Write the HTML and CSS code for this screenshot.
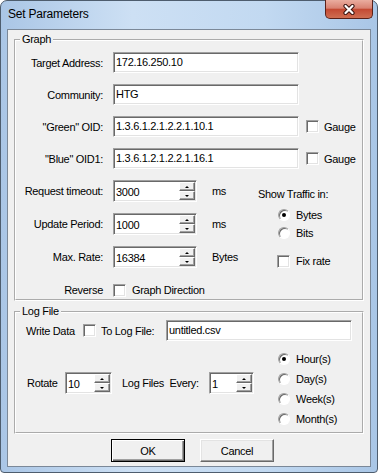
FILE: index.html
```html
<!DOCTYPE html>
<html lang="en">
<head>
  <meta charset="UTF-8" />
  <meta name="viewport" content="width=device-width, initial-scale=1.0"/>
  <title>Set Parameters</title>
  <link rel="stylesheet" href="styles.css">
</head>
<body>

  <div class="window">
    <div class="titlebar">
      <span class="title">Set Parameters</span>
      <div class="close-btn">
        <svg width="16" height="11" viewBox="0 0 16 11">
          <path d="M4.5 2 L11.5 9 M11.5 2 L4.5 9" stroke="#3b1410" stroke-width="4.2" stroke-linecap="round"/>
          <path d="M4.5 2 L11.5 9 M11.5 2 L4.5 9" stroke="#fff" stroke-width="2.2" stroke-linecap="round"/>
        </svg>
      </div>
    </div>

    <div class="client">
      <fieldset class="group graph">
        <legend>Graph</legend>

        <div class="row text-row first">
          <span class="label">Target Address:</span>
          <div class="edit wide">172.16.250.10</div>
        </div>
        <div class="row text-row">
          <span class="label">Community:</span>
          <div class="edit wide">HTG</div>
        </div>
        <div class="row text-row">
          <span class="label">&quot;Green&quot; OID:</span>
          <div class="edit wide">1.3.6.1.2.1.2.2.1.10.1</div>
          <span class="check gauge-check"></span>
          <span>Gauge</span>
        </div>
        <div class="row text-row">
          <span class="label">&quot;Blue&quot; OID1:</span>
          <div class="edit wide">1.3.6.1.2.1.2.2.1.16.1</div>
          <span class="check gauge-check"></span>
          <span>Gauge</span>
        </div>

        <div class="lower">
          <div class="spin-rows">
            <div class="row spin-row">
              <span class="label">Request timeout:</span>
              <div class="spin wide-spin">
                <span class="val">3000</span>
                <span class="arrows"><span class="up"></span><span class="down"></span></span>
              </div>
              <span class="unit">ms</span>
            </div>
            <div class="row spin-row">
              <span class="label">Update Period:</span>
              <div class="spin wide-spin">
                <span class="val">1000</span>
                <span class="arrows"><span class="up"></span><span class="down"></span></span>
              </div>
              <span class="unit">ms</span>
            </div>
            <div class="row spin-row">
              <span class="label">Max. Rate:</span>
              <div class="spin wide-spin">
                <span class="val">16384</span>
                <span class="arrows"><span class="up"></span><span class="down"></span></span>
              </div>
              <span class="unit">Bytes</span>
            </div>
            <div class="row reverse-row">
              <span class="label">Reverse</span>
              <span class="check"></span>
              <span class="check-text">Graph Direction</span>
            </div>
          </div>

          <div class="traffic">
            <div class="traffic-title">Show Traffic in:</div>
            <div class="option first-option"><span class="radio on"></span>Bytes</div>
            <div class="option"><span class="radio"></span>Bits</div>
            <div class="option fix"><span class="check"></span>Fix rate</div>
          </div>
        </div>
      </fieldset>

      <fieldset class="group log">
        <legend>Log File</legend>

        <div class="row write-row">
          <span class="write-label">Write Data</span>
          <span class="check"></span>
          <span class="to-label">To Log File:</span>
          <div class="edit file">untitled.csv</div>
        </div>

        <div class="log-lower">
          <div class="row rotate-row">
            <span class="rotate-label">Rotate</span>
            <div class="spin small-spin">
              <span class="val">10</span>
              <span class="arrows"><span class="up"></span><span class="down"></span></span>
            </div>
            <span class="every-label">Log Files&nbsp; Every:</span>
            <div class="spin tiny-spin">
              <span class="val">1</span>
              <span class="arrows"><span class="up"></span><span class="down"></span></span>
            </div>
          </div>
          <div class="period">
            <div class="option"><span class="radio on"></span>Hour(s)</div>
            <div class="option"><span class="radio"></span>Day(s)</div>
            <div class="option"><span class="radio"></span>Week(s)</div>
            <div class="option"><span class="radio"></span>Month(s)</div>
          </div>
        </div>
      </fieldset>

      <div class="buttons">
        <div class="btn default">OK</div>
        <div class="btn">Cancel</div>
      </div>
    </div>
  </div>

</body>
</html>
```

FILE: styles.css
```css
* {
  box-sizing: border-box;
}

body {
  margin: 0;
  background: #fff;
  font-family: "Liberation Sans", Arial, sans-serif;
  font-size: 11px;
  letter-spacing: -0.3px;
  color: #000;
  white-space: nowrap;
}

.window {
  width: 378px;
  height: 473px;
  border: 1px solid #4e5d6e;
  border-radius: 7px 7px 4px 4px;
  background: linear-gradient(to right, #aac6e6, #cde0f4 35%, #c2d9f1 70%, #a9c6e6);
  padding: 0 6px;
}

.titlebar {
  height: 28px;
  display: flex;
  align-items: flex-start;
}

.title {
  font-size: 12px;
  letter-spacing: -0.2px;
  line-height: 14px;
  margin: 6px 0 0 1px;
}

.close-btn {
  margin: -1px -2px 0 auto;
  width: 48px;
  height: 19px;
  border: 1px solid #5a2119;
  border-top: none;
  border-radius: 0 0 5px 5px;
  background: linear-gradient(#eaad9f, #d98272 45%, #c44a33 52%, #cf6e52);
  display: flex;
  align-items: center;
  justify-content: center;
}

.client {
  height: 438px;
  border: 1px solid #7b8898;
  background: #f0f0f0;
}

.group {
  margin: 3px 0 0 6px;
  width: 350px;
  padding: 0;
  border: 2px groove #fff;
  min-width: 0;
}

.graph {
  height: 268px;
}

.log {
  height: 129px;
  margin-top: 4px;
}

legend {
  padding: 0 2px;
  margin-left: 4px;
  line-height: 13px;
}

.row {
  display: flex;
  align-items: center;
}

.label {
  width: 87px;
  flex: none;
  text-align: right;
  margin-right: 10px;
}

.text-row {
  height: 21px;
  margin-top: 11px;
}

.text-row.first {
  margin-top: 6px;
}

.edit,
.spin {
  height: 21px;
  background: #fff;
  border: 1px solid;
  border-color: #a0a0a0 #fff #fff #a0a0a0;
  box-shadow: inset 1px 1px #696969, inset -1px -1px #e3e3e3;
}

.edit {
  padding: 0 2px;
  line-height: 19px;
}

.wide {
  width: 186px;
}

.check {
  width: 13px;
  height: 13px;
  flex: none;
  background: #fff;
  border: 1px solid;
  border-color: #a0a0a0 #fff #fff #a0a0a0;
  box-shadow: inset 1px 1px #696969, inset -1px -1px #e3e3e3;
}

.gauge-check {
  margin: 0 5px 0 7px;
}

.lower {
  display: flex;
}

.spin-rows {
  width: 242px;
  flex: none;
}

.spin-row {
  height: 22px;
  margin-top: 11px;
}

.spin {
  height: 22px;
  display: flex;
  padding: 1px;
}

.val {
  flex: 1;
  padding-left: 1px;
  line-height: 20px;
}

.arrows {
  width: 16px;
  display: flex;
  flex-direction: column;
}

.arrows span {
  flex: 1;
  position: relative;
  background: #f0f0f0;
  border: 1px solid;
  border-color: #fff #696969 #696969 #fff;
  box-shadow: inset -1px -1px #a0a0a0;
}

.arrows span::after {
  content: "";
  position: absolute;
  left: 5px;
  top: 3px;
  width: 4px;
  height: 2px;
  background: #000;
}

.arrows .up::after {
  clip-path: polygon(50% 0, 100% 100%, 0 100%);
}

.arrows .down::after {
  clip-path: polygon(0 0, 100% 0, 50% 100%);
}

.wide-spin {
  width: 84px;
}

.unit {
  margin-left: 15px;
}

.reverse-row {
  height: 16px;
  margin-top: 14px;
}

.check-text {
  margin-left: 6px;
}

.traffic-title {
  margin-top: 18px;
  line-height: 14px;
}

.option {
  display: flex;
  align-items: center;
  height: 18px;
}

.traffic .option {
  padding-left: 20px;
}

.first-option {
  margin-top: 5px;
}

.fix {
  margin-top: 10px;
}

.option .check {
  margin: 0 6px 0 -1px;
}

.radio {
  width: 12px;
  height: 12px;
  flex: none;
  position: relative;
  margin-right: 6px;
  border-radius: 50%;
  background: #fff;
  border: 1px solid;
  border-color: #a0a0a0 #fff #fff #a0a0a0;
  box-shadow: inset 1px 1px #696969;
}

.radio.on::after {
  content: "";
  position: absolute;
  left: 3px;
  top: 3px;
  width: 4px;
  height: 4px;
  border-radius: 50%;
  background: #000;
}

.write-row {
  height: 21px;
  margin-top: 2px;
  padding-left: 10px;
}

.write-label {
  width: 57px;
}

.write-row .check {
  margin-right: 5px;
}

.to-label {
  width: 65px;
}

.file {
  width: 186px;
}

.log-lower {
  display: flex;
  margin-top: 8px;
}

.rotate-row {
  width: 262px;
  flex: none;
  height: 22px;
  margin-top: 23px;
  padding-left: 11px;
}

.rotate-label {
  width: 38px;
}

.small-spin {
  width: 47px;
}

.every-label {
  width: 87px;
  margin-left: 10px;
}

.tiny-spin {
  width: 45px;
}

.period .option {
  height: 20px;
}

.buttons {
  display: flex;
  gap: 15px;
  margin: 5px 0 0 103px;
}

.btn {
  width: 74px;
  height: 23px;
  display: flex;
  align-items: center;
  justify-content: center;
  background: #f0f0f0;
  border: 1px solid;
  border-color: #fff #696969 #696969 #fff;
  box-shadow: inset -1px -1px #a0a0a0, inset 1px 1px #e3e3e3;
}

.btn.default {
  border: 1px solid #000;
  box-shadow: inset 1px 1px #fff, inset -1px -1px #696969, inset -2px -2px #a0a0a0;
}
```
